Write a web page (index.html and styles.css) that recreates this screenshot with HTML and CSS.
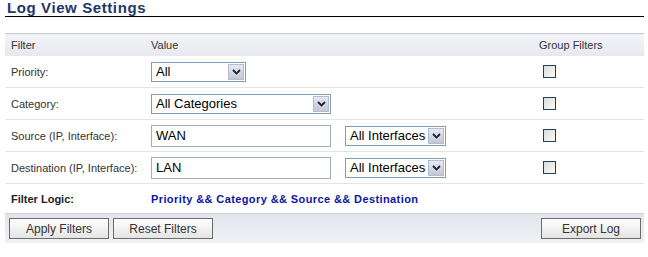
FILE: index.html
```html
<!DOCTYPE html>
<html lang="en">
<head>
    <meta charset="UTF-8">
    <title>Log View Settings</title>
    <link rel="stylesheet" href="styles.css">
</head>
<body>

<div class="panel">
    <h1 class="title">Log View Settings</h1>

    <table class="settings">
        <tr class="head">
            <th class="col-filter">Filter</th>
            <th colspan="2">Value</th>
            <th class="col-group">Group Filters</th>
        </tr>
        <tr>
            <td>Priority:</td>
            <td colspan="2">
                <div class="select w-priority"><span class="text">All</span><span class="arrow"><svg width="9" height="6" viewBox="0 0 9 6"><path d="M1 1 L4.5 4.5 L8 1" fill="none" stroke="#223" stroke-width="1.8"/></svg></span></div>
            </td>
            <td class="col-group"><span class="check"></span></td>
        </tr>
        <tr>
            <td>Category:</td>
            <td colspan="2">
                <div class="select w-category"><span class="text">All Categories</span><span class="arrow"><svg width="9" height="6" viewBox="0 0 9 6"><path d="M1 1 L4.5 4.5 L8 1" fill="none" stroke="#223" stroke-width="1.8"/></svg></span></div>
            </td>
            <td class="col-group"><span class="check"></span></td>
        </tr>
        <tr>
            <td>Source (IP, Interface):</td>
            <td class="col-input"><input type="text" value="WAN"></td>
            <td>
                <div class="select w-iface"><span class="text">All Interfaces</span><span class="arrow"><svg width="9" height="6" viewBox="0 0 9 6"><path d="M1 1 L4.5 4.5 L8 1" fill="none" stroke="#223" stroke-width="1.8"/></svg></span></div>
            </td>
            <td class="col-group"><span class="check"></span></td>
        </tr>
        <tr>
            <td>Destination (IP, Interface):</td>
            <td class="col-input"><input type="text" value="LAN"></td>
            <td>
                <div class="select w-iface"><span class="text">All Interfaces</span><span class="arrow"><svg width="9" height="6" viewBox="0 0 9 6"><path d="M1 1 L4.5 4.5 L8 1" fill="none" stroke="#223" stroke-width="1.8"/></svg></span></div>
            </td>
            <td class="col-group"><span class="check"></span></td>
        </tr>
        <tr class="logic">
            <td><strong>Filter Logic:</strong></td>
            <td colspan="3" class="logic-text">Priority &amp;&amp; Category &amp;&amp; Source &amp;&amp; Destination</td>
        </tr>
    </table>

    <div class="button-bar">
        <button>Apply Filters</button>
        <button>Reset Filters</button>
        <span class="spacer"></span>
        <button>Export Log</button>
    </div>
</div>

</body>
</html>
```

FILE: styles.css
```css
body {
    margin: 0;
    padding: 0;
    background-color: #fff;
    font-family: 'Liberation Sans', Arial, sans-serif;
    font-size: 11px;
    color: #333;
}
.panel {
    width: 639px;
    margin-left: 5px;
}
.title {
    margin: 0;
    padding: 0 0 0 2px;
    height: 16px;
    font-size: 15px;
    line-height: 16px;
    font-weight: bold;
    letter-spacing: 0.6px;
    color: #1d3768;
    border-bottom: 1px solid #000;
}
.settings {
    width: 100%;
    margin-top: 16px;
    border-collapse: collapse;
}
.settings th {
    height: 22px;
    padding: 0 0 0 6px;
    text-align: left;
    font-weight: normal;
    color: #333;
    background: linear-gradient(#f3f4f8, #e6e8ee);
    border-top: 1px solid #c9cbd2;
}
.settings td {
    height: 31px;
    padding: 0 0 0 6px;
    border-bottom: 1px solid #e3e3e3;
}
.settings .col-filter {
    width: 134px;
}
.settings .col-input {
    width: 188px;
}
.settings .col-group {
    width: 101px;
    padding-left: 5px;
}
.settings th.col-group {
    padding-left: 1px;
}
.select {
    display: flex;
    align-items: center;
    height: 20px;
    box-sizing: border-box;
    border: 1px solid #7f9db9;
    background-color: #fff;
    font-size: 13px;
    color: #000;
}
.select .text {
    flex: 1;
    padding-left: 4px;
}
.select .arrow {
    display: flex;
    align-items: center;
    justify-content: center;
    width: 16px;
    height: 16px;
    margin-right: 1px;
    border: 1px solid #b4bccd;
    box-sizing: border-box;
    background: linear-gradient(#e6e9f2, #c2c7d6);
}
.w-priority {
    width: 95px;
}
.w-category {
    width: 180px;
}
.w-iface {
    width: 101px;
}
input[type="text"] {
    width: 180px;
    height: 22px;
    box-sizing: border-box;
    margin: 0;
    padding: 0 4px;
    border: 1px solid #a5acb2;
    font-family: 'Liberation Sans', Arial, sans-serif;
    font-size: 13px;
    color: #000;
}
.check {
    display: block;
    width: 13px;
    height: 13px;
    box-sizing: border-box;
    border: 1px solid #1c3d6b;
    background: linear-gradient(135deg, #dcdcd6, #fbfbf8);
}
.settings .logic td {
    height: 29px;
    border-bottom: none;
    color: #222;
}
.settings .logic .logic-text {
    font-weight: bold;
    letter-spacing: 0.4px;
    color: #0c16a6;
}
.button-bar {
    display: flex;
    gap: 4px;
    height: 30px;
    box-sizing: border-box;
    padding: 4px 3px 0 4px;
    border-top: 1px solid #cfd1d8;
    background: linear-gradient(#e3e5ec, #f0f1f4);
}
.button-bar .spacer {
    flex: 1;
}
.button-bar button {
    width: 100px;
    height: 21px;
    padding: 0;
    border: 1px solid #6b6b6b;
    background: linear-gradient(#ffffff, #e4e4e4);
    font-family: 'Liberation Sans', Arial, sans-serif;
    font-size: 12px;
    color: #333;
}
```
